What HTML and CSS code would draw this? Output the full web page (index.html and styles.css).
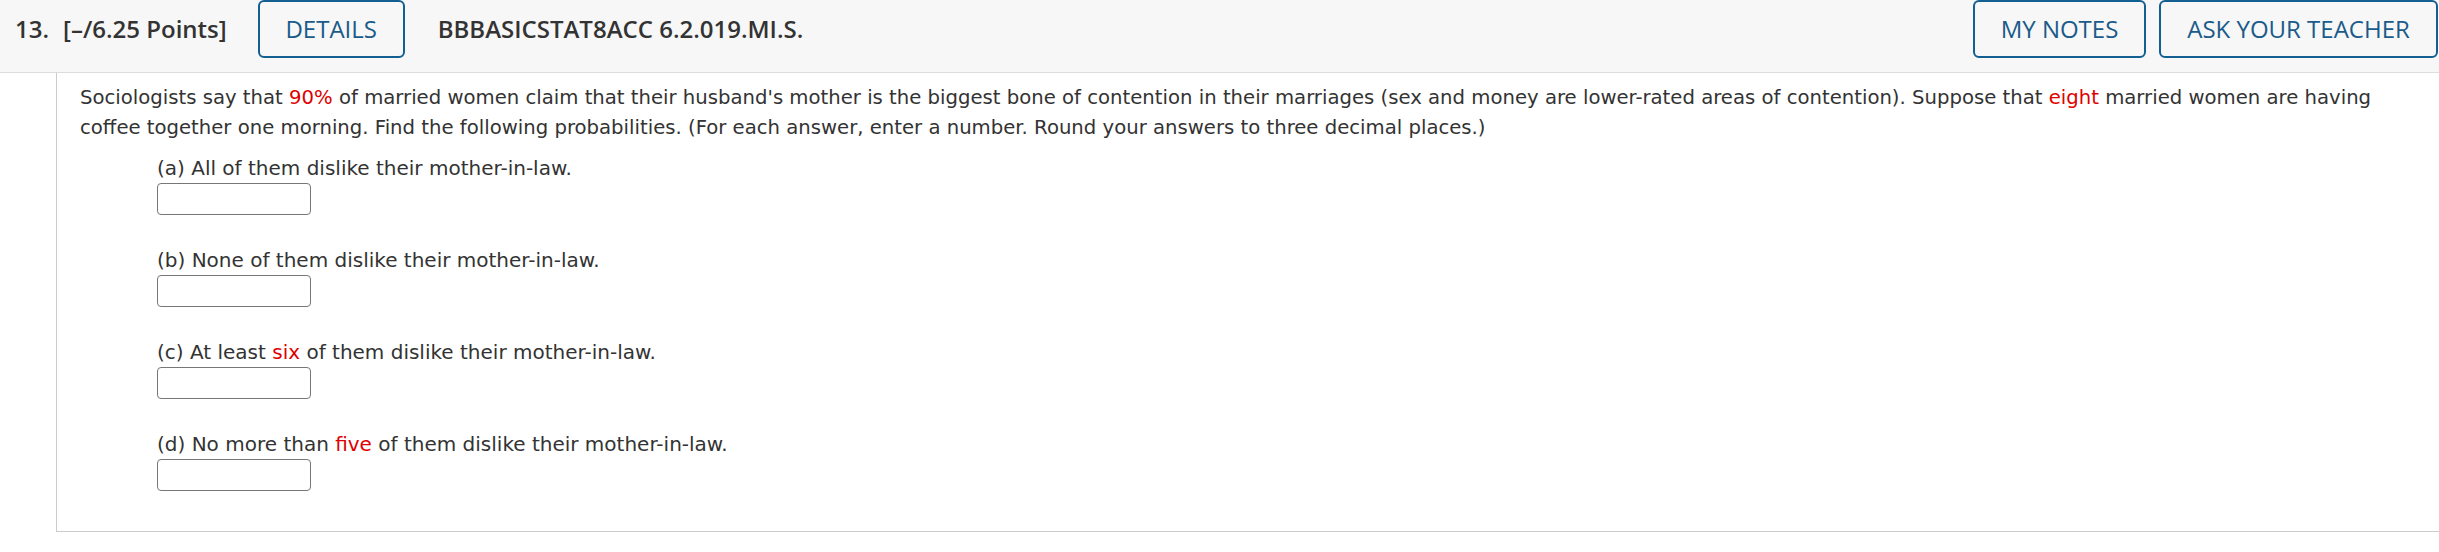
FILE: index.html
```html
<!DOCTYPE html>
<html>
<head>
<meta charset="utf-8">
<link rel="stylesheet" href="styles.css">
</head>
<body>
<div class="question">
  <div class="qhead">
    <div class="qleft">
      <span class="qnum">13.</span>
      <span class="qpts">[–/6.25 Points]</span>
      <button class="btn details">DETAILS</button>
      <span class="qid">BBBASICSTAT8ACC 6.2.019.MI.S.</span>
    </div>
    <div class="qright">
      <button class="btn notes">MY NOTES</button>
      <button class="btn ask">ASK YOUR TEACHER</button>
    </div>
  </div>
  <div class="qbody">
    <p class="intro">Sociologists say that <span class="red">90%</span> of married women claim that their husband's mother is the biggest bone of contention in their marriages (sex and money are lower-rated areas of contention). Suppose that <span class="red">eight</span> married women are having coffee together one morning. Find the following probabilities. (For each answer, enter a number. Round your answers to three decimal places.)</p>
    <div class="part">
      <div class="ptext">(a) All of them dislike their mother-in-law.</div>
      <input class="ans" type="text">
    </div>
    <div class="part">
      <div class="ptext">(b) None of them dislike their mother-in-law.</div>
      <input class="ans" type="text">
    </div>
    <div class="part">
      <div class="ptext">(c) At least <span class="red">six</span> of them dislike their mother-in-law.</div>
      <input class="ans" type="text">
    </div>
    <div class="part">
      <div class="ptext">(d) No more than <span class="red">five</span> of them dislike their mother-in-law.</div>
      <input class="ans" type="text">
    </div>
  </div>
</div>
</body>
</html>
```
FILE: styles.css
```css
html, body {
  margin: 0;
  padding: 0;
  background: #ffffff;
}
.question {
  width: 2439px;
}
.qhead {
  display: flex;
  justify-content: space-between;
  align-items: flex-start;
  background: #f7f7f7;
  border-bottom: 1px solid #dddddd;
  box-sizing: border-box;
  height: 73px;
  padding-left: 15px;
  padding-right: 1px;
  font-family: "Open Sans", sans-serif;
}
.qleft, .qright {
  display: flex;
  align-items: center;
  height: 58px;
}
.qnum, .qpts, .qid {
  font-size: 24px;
  font-weight: 600;
  color: #333333;
  line-height: 30px;
}
.qnum { margin-right: 14px; }
.qpts { margin-right: 31px; }
.qid { margin-left: 33px; }
.btn {
  font-family: "Open Sans", sans-serif;
  font-size: 24px;
  font-weight: 400;
  line-height: 30px;
  color: #1a5b8a;
  background: #f7f7f7;
  border: 2px solid #125f92;
  border-radius: 6px;
  height: 58px;
  box-sizing: border-box;
  padding: 0;
  margin: 0;
}
.details { width: 147px; }
.notes { width: 173px; margin-right: 13px; }
.ask { width: 279px; }
.qbody {
  margin-left: 56px;
  border-left: 1px solid #cccccc;
  border-bottom: 1px solid #cccccc;
  padding: 10px 10px 10px 23px;
  font-family: "DejaVu Sans", Verdana, sans-serif;
  font-size: 20px;
  line-height: 30px;
  color: #333333;
}
.intro {
  margin: 0 0 10px 0;
  font-size: 19.66px;
}
.red { color: #e00000; }
.part {
  margin-left: 77px;
  margin-bottom: 30px;
}
.ptext {
  height: 30px;
}
.ans {
  display: block;
  width: 154px;
  height: 32px;
  box-sizing: border-box;
  border: 1px solid #777777;
  border-radius: 4px;
  background: #ffffff;
  margin: 0;
  padding: 0 4px;
}
```
